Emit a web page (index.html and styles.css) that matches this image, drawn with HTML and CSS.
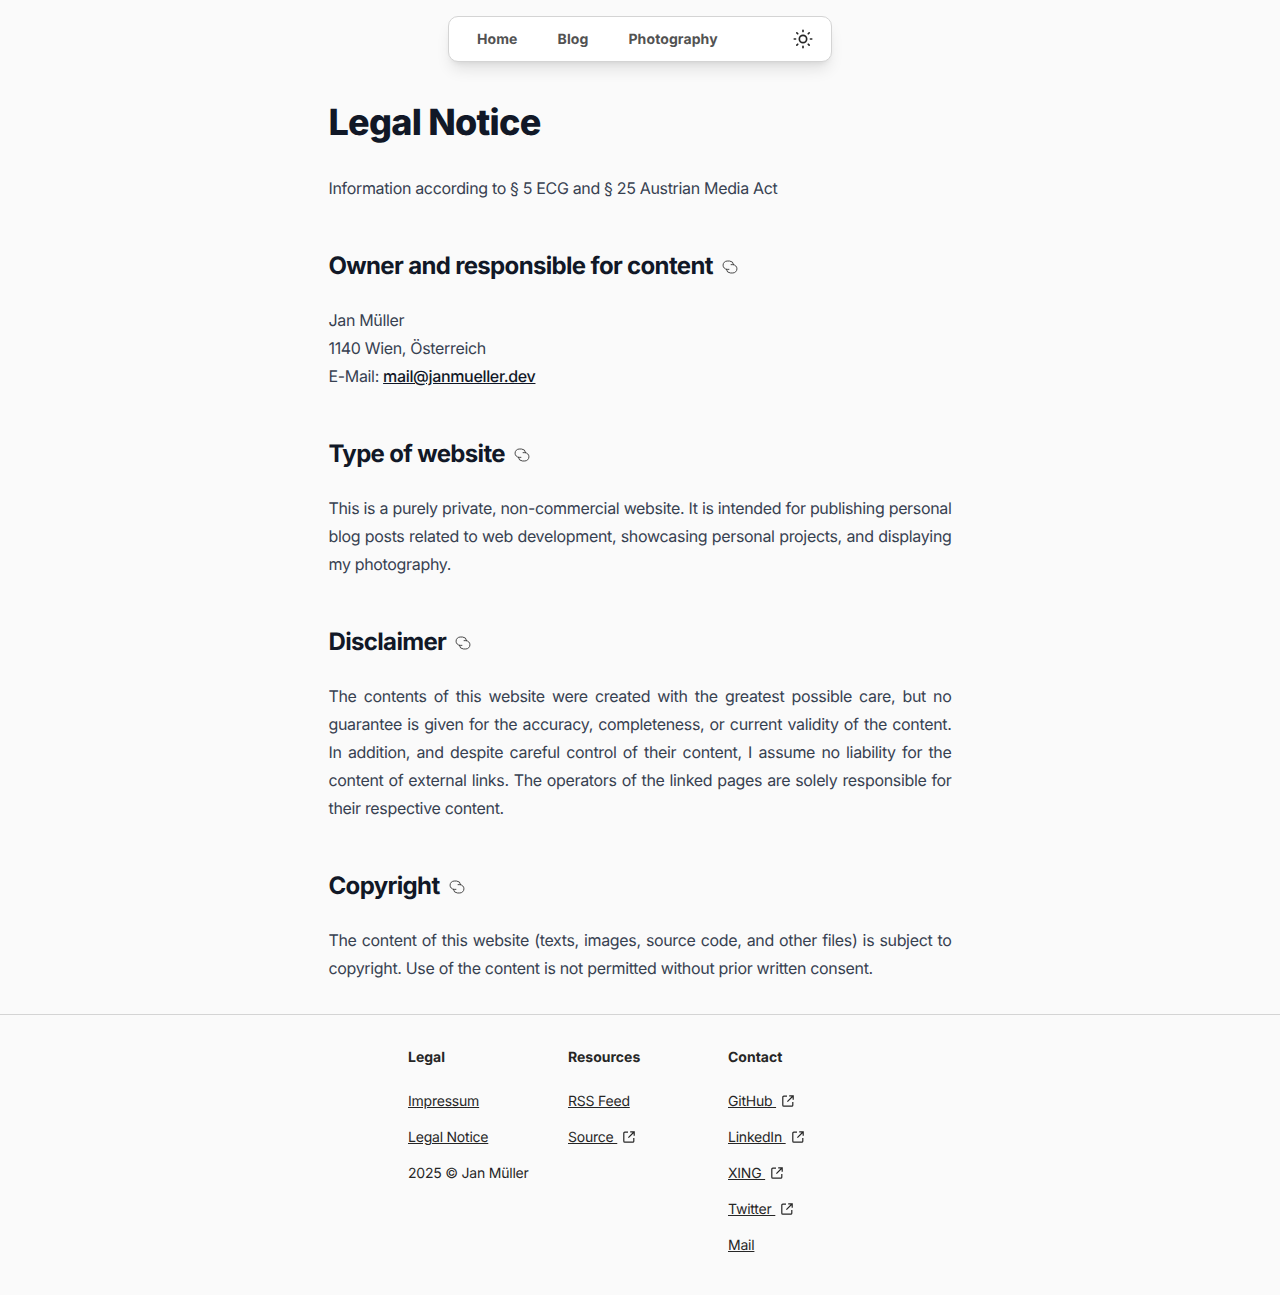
FILE: index.html
```html
<!DOCTYPE html>
<html lang="en">
<head>
    <meta charset="UTF-8">
    <meta name="viewport" content="width=device-width, initial-scale=1.0">
    <title>Legal Notice</title>
    <link rel="stylesheet" href="styles.css">
</head>
<body>
    <!-- Floating navigation -->
    <div class="nav_wrap">
        <nav class="nav">
            <div class="nav_links">
                <a href="#">Home</a>
                <a href="#">Blog</a>
                <a href="#">Photography</a>
            </div>
            <svg class="sun" viewBox="0 0 24 24" fill="none" stroke="currentColor" stroke-width="2" stroke-linecap="round">
                <circle cx="12" cy="12" r="4.4"/>
                <path d="M12 1.5v1.6M12 20.9v1.6M1.500 12h1.600M20.900 12h1.600M4.600 4.600l1.100 1.100M18.300 18.300l1.100 1.100M4.600 19.400l1.100-1.100M18.300 5.700l1.100-1.100"/>
            </svg>
        </nav>
    </div>

    <!-- Main text -->
    <main class="prose">
        <h1>Legal Notice</h1>
        <p>Information according to § 5 ECG and § 25 Austrian Media Act</p>

        <h2>Owner and responsible for content <svg class="chain"><use href="#chain"/></svg></h2>
        <p>Jan Müller<br>1140 Wien, Österreich<br>E-Mail: <a href="#">mail@janmueller.dev</a></p>

        <h2>Type of website <svg class="chain"><use href="#chain"/></svg></h2>
        <p>This is a purely private, non-commercial website. It is intended for publishing personal blog posts related to web development, showcasing personal projects, and displaying my photography.</p>

        <h2>Disclaimer <svg class="chain"><use href="#chain"/></svg></h2>
        <p>The contents of this website were created with the greatest possible care, but no guarantee is given for the accuracy, completeness, or current validity of the content. In addition, and despite careful control of their content, I assume no liability for the content of external links. The operators of the linked pages are solely responsible for their respective content.</p>

        <h2>Copyright <svg class="chain"><use href="#chain"/></svg></h2>
        <p>The content of this website (texts, images, source code, and other files) is subject to copyright. Use of the content is not permitted without prior written consent.</p>
    </main>

    <!-- Footer -->
    <footer class="footer">
        <div class="footer_col">
            <h3>Legal</h3>
            <a href="#">Impressum</a>
            <a href="#">Legal Notice</a>
            <span>2025 © Jan Müller</span>
        </div>
        <div class="footer_col">
            <h3>Resources</h3>
            <a href="#">RSS Feed</a>
            <div><a href="#">Source </a><svg class="ext"><use href="#ext"/></svg></div>
        </div>
        <div class="footer_col">
            <h3>Contact</h3>
            <div><a href="#">GitHub </a><svg class="ext"><use href="#ext"/></svg></div>
            <div><a href="#">LinkedIn </a><svg class="ext"><use href="#ext"/></svg></div>
            <div><a href="#">XING </a><svg class="ext"><use href="#ext"/></svg></div>
            <div><a href="#">Twitter </a><svg class="ext"><use href="#ext"/></svg></div>
            <a href="#">Mail</a>
        </div>
    </footer>

    <!-- Shared icons -->
    <svg class="defs" aria-hidden="true">
        <symbol id="chain" viewBox="0.5 1.5 15 13">
            <g fill="none" stroke="currentColor" stroke-width="0.9" stroke-linecap="round">
                <path d="M7 10.200H5.400a3.900 3.900 0 0 1 0-7.800h2.200a3.900 3.900 0 0 1 3.800 3.400"/>
                <path d="M9 5.800h1.600a3.900 3.900 0 0 1 0 7.800H8.400a3.900 3.900 0 0 1-3.800-3.400"/>
            </g>
        </symbol>
        <symbol id="ext" viewBox="0 0 14 14">
            <path d="M6 2.200H2.800a1 1 0 0 0-1 1v8a1 1 0 0 0 1 1h8a1 1 0 0 0 1-1V8M8.200 1.800h4V5.800M12 2 6.400 7.600" fill="none" stroke="currentColor" stroke-width="1.200"/>
        </symbol>
    </svg>
</body>
</html>
```

FILE: styles.css
```css
* {
    box-sizing: border-box;
}

body {
    margin: 0;
    background-color: #fafafa;
    font-family: Inter, "Liberation Sans", sans-serif;
    text-rendering: geometricPrecision;
    color: #374151;
}

/* Navigation */
.nav_wrap {
    display: flex;
    justify-content: center;
    padding-top: 16px;
}

.nav {
    width: 384px;
    height: 46px;
    display: flex;
    align-items: center;
    justify-content: space-between;
    padding: 0 18px 0 28px;
    background-color: #fff;
    border: 1px solid #d4d4d4;
    border-radius: 10px;
    box-shadow: 0 10px 15px -3px rgba(0, 0, 0, 0.1), 0 4px 6px -4px rgba(0, 0, 0, 0.1);
}

.nav_links {
    display: flex;
    gap: 40px;
}

.nav_links a {
    font-size: 14px;
    font-weight: 700;
    letter-spacing: 0.1px;
    color: #525252;
    text-decoration: none;
}

.sun {
    width: 20px;
    height: 20px;
    color: #262626;
}

/* Text */
.prose {
    width: 623px;
    margin: 0 auto;
    padding-top: 40px;
    font-size: 16px;
    line-height: 28px;
    letter-spacing: -0.335px;
}

.prose h1 {
    margin: 0 0 32px;
    font-size: 36px;
    line-height: 40px;
    font-weight: 800;
    letter-spacing: -0.75px;
    color: #111827;
}

.prose h2 {
    margin: 48px 0 24px;
    font-size: 24px;
    line-height: 32px;
    font-weight: 700;
    letter-spacing: -0.66px;
    color: #111827;
}

.prose p {
    margin: 20px 0;
    text-align: justify;
}

.prose a {
    color: #111827;
    font-weight: 500;
}

.chain {
    width: 16px;
    height: 14px;
    margin-left: 4px;
    vertical-align: 0;
    color: #404040;
}

/* Footer */
.footer {
    display: flex;
    justify-content: center;
    margin-top: 32px;
    padding: 33px 0 31px 16px;
    border-top: 1px solid #d4d4d4;
    font-size: 14px;
    line-height: 20px;
    letter-spacing: -0.22px;
    color: #262626;
}

.footer_col {
    width: 160px;
    display: flex;
    flex-direction: column;
    align-items: flex-start;
    gap: 16px;
}

.footer_col h3 {
    margin: 0 0 8px;
    font-size: 14px;
    line-height: 20px;
    font-weight: 700;
    letter-spacing: 0;
}

.footer_col a {
    color: #262626;
}

.ext {
    width: 14px;
    height: 14px;
    margin-left: 5px;
    vertical-align: -2px;
}

.defs {
    display: none;
}
```
